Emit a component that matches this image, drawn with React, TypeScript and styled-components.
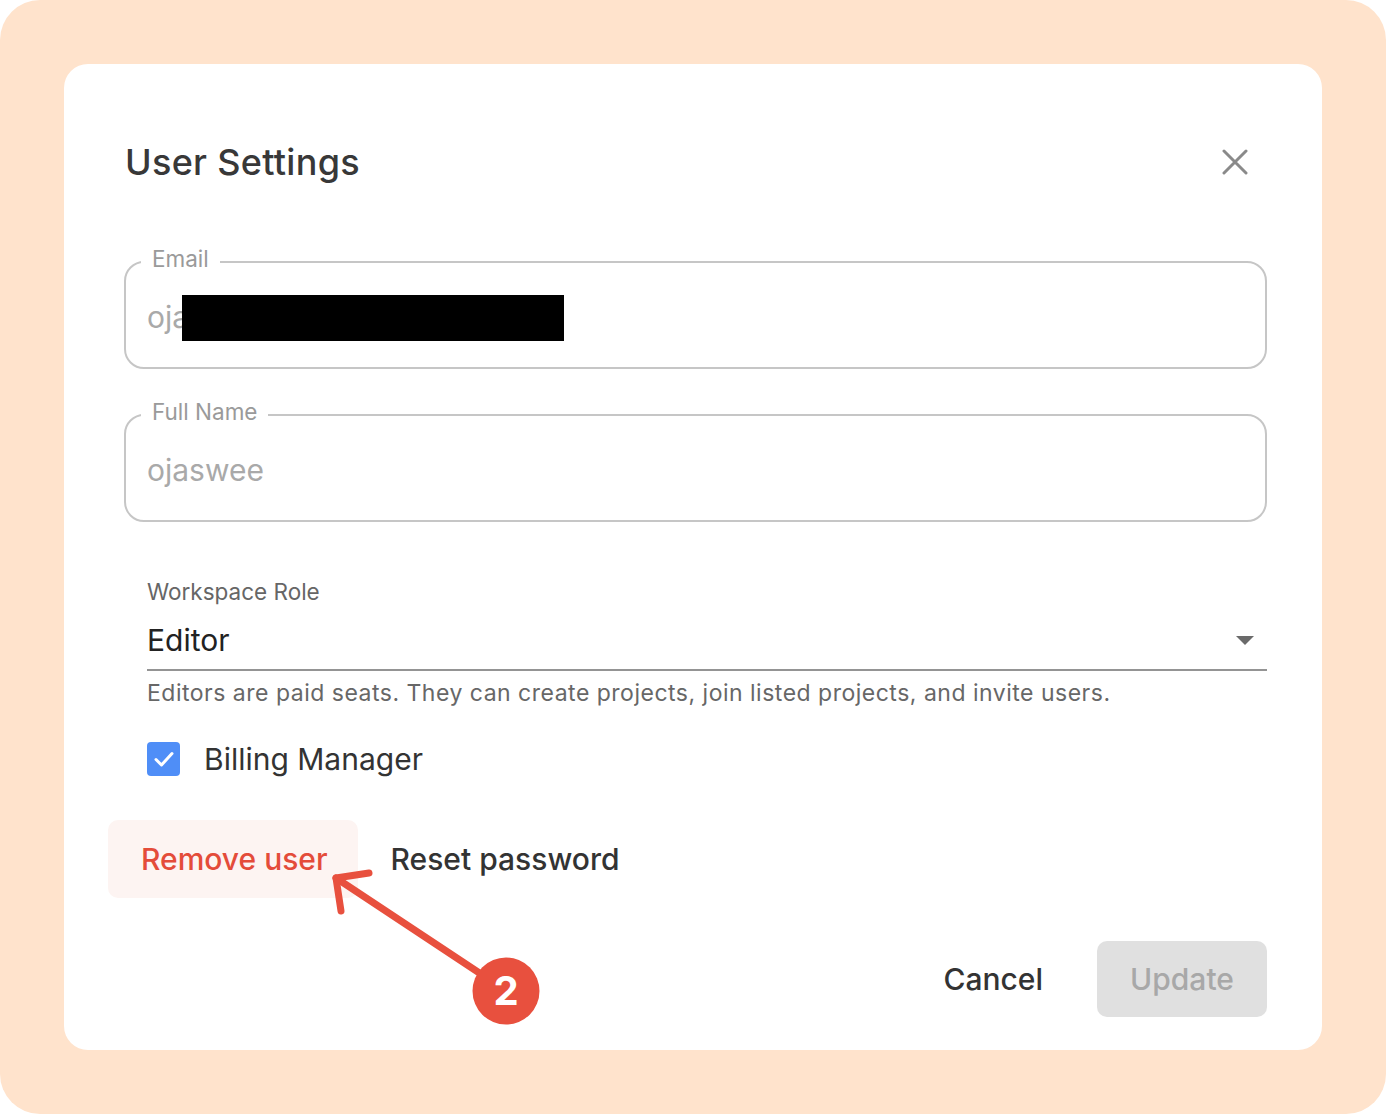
import React from 'react';
import styled, { createGlobalStyle } from 'styled-components';

const GlobalStyle = createGlobalStyle`
    html, body {
        margin: 0;
        padding: 0;
        background: #ffffff;
    }
    body {
        font-family: Inter, "Noto Sans", "Liberation Sans", sans-serif;
    }
`;

const App = () => {
    return (
        <>
            <GlobalStyle />
            <Frame>
                <Card>
                    <Header>
                        <Title>User Settings</Title>
                        <CloseButton aria-label="Close">
                            <svg width="26" height="26" viewBox="0 0 26 26">
                                <path d="M2 2 L24 24 M24 2 L2 24" stroke="#8a8a8a" strokeWidth="3" strokeLinecap="round" />
                            </svg>
                        </CloseButton>
                    </Header>

                    <Field>
                        <Legend>Email</Legend>
                        <Value>
                            oja<Redaction />
                        </Value>
                    </Field>

                    <Field spaced>
                        <Legend>Full Name</Legend>
                        <Value>ojaswee</Value>
                    </Field>

                    <RoleSection>
                        <RoleLabel>Workspace Role</RoleLabel>
                        <Select>
                            <SelectValue>Editor</SelectValue>
                            <Caret />
                        </Select>
                        <Helper>Editors are paid seats. They can create projects, join listed projects, and invite users.</Helper>
                        <CheckRow>
                            <Checkbox>
                                <svg width="22" height="18" viewBox="0 0 22 18">
                                    <path d="M3 9.5 L8.5 15 L19 3.5" stroke="#ffffff" strokeWidth="3" fill="none" strokeLinecap="round" strokeLinejoin="round" />
                                </svg>
                            </Checkbox>
                            <CheckLabel>Billing Manager</CheckLabel>
                        </CheckRow>
                    </RoleSection>

                    <ActionRow>
                        <TextButton danger>Remove user</TextButton>
                        <TextButton>Reset password</TextButton>
                    </ActionRow>

                    <Footer>
                        <TextButton>Cancel</TextButton>
                        <PrimaryButton disabled>Update</PrimaryButton>
                    </Footer>
                </Card>

                <Annotation width="1386" height="1114" viewBox="0 0 1386 1114">
                    <g stroke="#e8503e" strokeWidth="7" strokeLinecap="round" strokeLinejoin="round" fill="none">
                        <path d="M490 980 L336 878" />
                        <path d="M369 873 L336 878 L341 911" />
                    </g>
                    <circle cx="506" cy="991" r="33.5" fill="#e8503e" />
                    <text x="506" y="1005" textAnchor="middle" fill="#ffffff" fontFamily="Inter, 'Noto Sans', sans-serif" fontWeight="700" fontSize="40">2</text>
                </Annotation>
            </Frame>
        </>
    );
};

const Frame = styled.div`
    position: relative;
    width: 1386px;
    height: 1114px;
    box-sizing: border-box;
    padding: 64px;
    background: #ffe3cc;
    border-radius: 40px;
`;

const Card = styled.div`
    box-sizing: border-box;
    height: 100%;
    background: #ffffff;
    border-radius: 24px;
    padding: 78px 55px 32px 61px;
    display: flex;
    flex-direction: column;
`;

const Header = styled.div`
    display: flex;
    align-items: center;
    justify-content: space-between;
    height: 40px;
`;

const Title = styled.h1`
    margin: 0;
    font-size: 36px;
    line-height: 40px;
    font-weight: 500;
    color: #383838;
    letter-spacing: 0.3px;
`;

const CloseButton = styled.button`
    border: none;
    background: none;
    padding: 0;
    margin-right: 19px;
    width: 26px;
    height: 26px;
    display: flex;
    cursor: pointer;
`;

const Field = styled.fieldset<{ spaced?: boolean }>`
    margin: ${p => (p.spaced ? '33px' : '67px')} 0 0 -1px;
    padding: 0 20px 0 21px;
    min-inline-size: 0;
    border: 2px solid #c6c6c6;
    border-radius: 20px;
    height: 120px;
    box-sizing: border-box;
`;

const Legend = styled.legend`
    margin-left: -6px;
    padding: 0 11px 6px 11px;
    font-size: 22.5px;
    line-height: 20px;
    color: #9a9a9a;
`;

const Value = styled.div`
    display: flex;
    align-items: center;
    padding-top: 24px;
    height: 36px;
    font-size: 30px;
    line-height: 36px;
    color: #a9a9a9;
`;

const Redaction = styled.span`
    display: inline-block;
    width: 382px;
    height: 46px;
    margin-left: -7px;
    margin-top: 2px;
    background: #000000;
`;

const RoleSection = styled.div`
    margin-top: 57px;
    padding-left: 22px;
    display: flex;
    flex-direction: column;
`;

const RoleLabel = styled.div`
    font-size: 22.5px;
    line-height: 26px;
    color: #666666;
`;

const Select = styled.div`
    margin-top: 17px;
    display: flex;
    align-items: center;
    justify-content: space-between;
    padding-bottom: 11px;
    border-bottom: 2px solid #949494;
`;

const SelectValue = styled.div`
    font-size: 30px;
    line-height: 36px;
    color: #222222;
`;

const Caret = styled.span`
    width: 0;
    height: 0;
    margin-right: 13px;
    border-left: 9px solid transparent;
    border-right: 9px solid transparent;
    border-top: 9px solid #6a6a6a;
`;

const Helper = styled.div`
    margin-top: 8px;
    font-size: 23px;
    line-height: 28px;
    letter-spacing: 0.5px;
    color: #676767;
`;

const CheckRow = styled.div`
    margin-top: 35px;
    display: flex;
    align-items: center;
    gap: 24px;
`;

const Checkbox = styled.span`
    width: 33px;
    height: 34px;
    border-radius: 4px;
    background: #4f8ef7;
    display: flex;
    align-items: center;
    justify-content: center;
`;

const CheckLabel = styled.span`
    font-size: 30px;
    line-height: 34px;
    color: #333333;
`;

const ActionRow = styled.div`
    margin-top: 44px;
    margin-left: -17px;
    display: flex;
    align-items: center;
`;

const TextButton = styled.button<{ danger?: boolean }>`
    height: 78px;
    padding: 0 30px 0 33px;
    border: none;
    border-radius: 10px;
    background: ${p => (p.danger ? '#fdf4f2' : 'transparent')};
    color: ${p => (p.danger ? '#e44c3a' : '#333333')};
    font-family: inherit;
    font-size: 30px;
    font-weight: 500;
    cursor: pointer;
`;

const Footer = styled.div`
    margin-top: auto;
    display: flex;
    justify-content: flex-end;
    align-items: center;
    gap: 24px;
`;

const PrimaryButton = styled.button`
    width: 170px;
    height: 76px;
    border: none;
    border-radius: 10px;
    background: #e0e0e0;
    color: #a8a8a8;
    font-family: inherit;
    font-size: 30px;
    font-weight: 500;
`;

const Annotation = styled.svg`
    position: absolute;
    left: 0;
    top: 0;
    pointer-events: none;
`;

export default App;
